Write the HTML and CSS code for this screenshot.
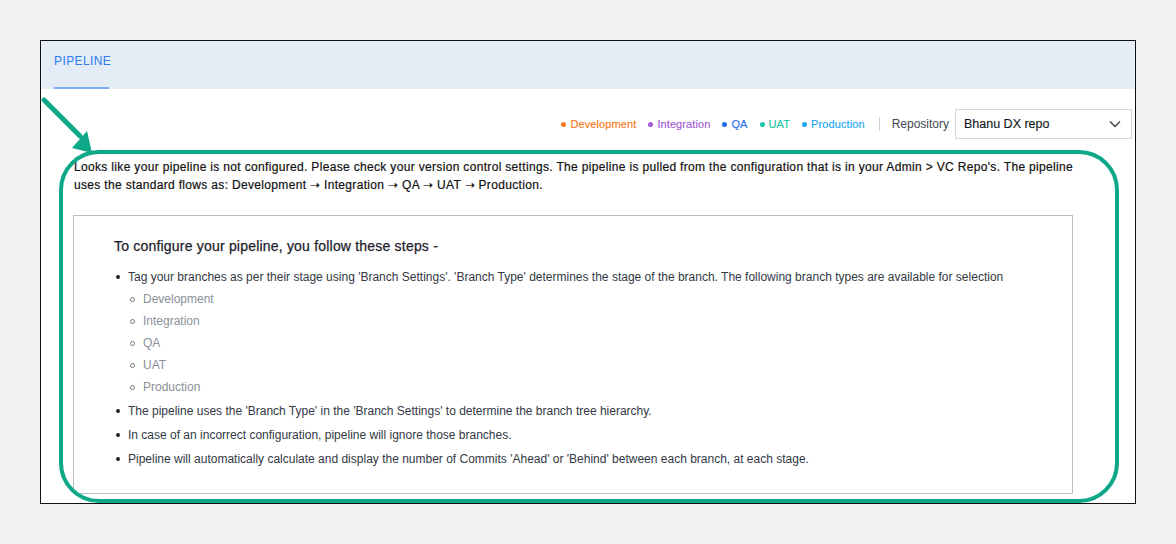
FILE: index.html
```html
<!DOCTYPE html>
<html lang="en">
<head>
    <meta charset="UTF-8">
    <title>Pipeline</title>
    <link rel="stylesheet" href="styles.css">
</head>
<body>
    <div class="frame">
        <div class="tabs">
            <div class="tab active">PIPELINE</div>
        </div>

        <div class="toolbar">
            <ul class="legend">
                <li class="dev">Development</li>
                <li class="int">Integration</li>
                <li class="qa">QA</li>
                <li class="uat">UAT</li>
                <li class="prod">Production</li>
            </ul>
            <div class="divider"></div>
            <span class="repo-label">Repository</span>
            <div class="select">
                <span>Bhanu DX repo</span>
                <svg width="12" height="8" viewBox="0 0 12 8"><path d="M1 1.5 L6 6.5 L11 1.5" fill="none" stroke="#3a3f47" stroke-width="1.3"/></svg>
            </div>
        </div>

        <div class="content">
            <p class="notice">Looks like your pipeline is not configured. Please check your version control settings. The pipeline is pulled from the configuration that is in your Admin &gt; VC Repo's. The pipeline<br>uses the standard flows as: Development &#10141; Integration &#10141; QA &#10141; UAT &#10141; Production.</p>

            <div class="steps">
                <h3>To configure your pipeline, you follow these steps -</h3>
                <ul>
                    <li>Tag your branches as per their stage using 'Branch Settings'. 'Branch Type' determines the stage of the branch. The following branch types are available for selection
                        <ul class="sub">
                            <li>Development</li>
                            <li>Integration</li>
                            <li>QA</li>
                            <li>UAT</li>
                            <li>Production</li>
                        </ul>
                    </li>
                    <li>The pipeline uses the 'Branch Type' in the 'Branch Settings' to determine the branch tree hierarchy.</li>
                    <li>In case of an incorrect configuration, pipeline will ignore those branches.</li>
                    <li>Pipeline will automatically calculate and display the number of Commits 'Ahead' or 'Behind' between each branch, at each stage.</li>
                </ul>
            </div>
        </div>

        <!-- annotation overlay -->
        <div class="highlight"></div>
        <svg class="arrow" width="60" height="120" viewBox="0 0 60 120">
            <line x1="3" y1="59" x2="39" y2="95" stroke="#0ca887" stroke-width="5" stroke-linecap="round"/>
            <polygon points="31,107 46,90 51,112" fill="#0ca887"/>
        </svg>
    </div>
</body>
</html>
```

FILE: styles.css
```css
body {
    margin: 0;
    padding: 40px 0 0 40px;
    background: #f1f1f1;
    font-family: "Liberation Sans", Arial, sans-serif;
}

.frame {
    position: relative;
    box-sizing: border-box;
    width: 1096px;
    height: 464px;
    background: #fff;
    border: 1px solid #111;
}

.tabs {
    height: 48px;
    background: #e4ecf5;
    padding-left: 13px;
}

.tab {
    display: inline-block;
    box-sizing: border-box;
    height: 48px;
    padding-top: 13px;
    width: 55px;
    font-size: 12px;
    line-height: 14px;
    color: #2c7bf2;
    letter-spacing: 0.4px;
    white-space: nowrap;
}

.tab.active {
    border-bottom: 2px solid #7aacf4;
}

.toolbar {
    display: flex;
    justify-content: flex-end;
    align-items: center;
    margin-top: 20px;
    padding-right: 3px;
}

.legend {
    display: flex;
    gap: 12px;
    margin: 0;
    padding: 0;
    list-style: none;
    font-size: 11px;
    letter-spacing: 0.1px;
}

.legend li {
    display: flex;
    align-items: center;
    -webkit-text-stroke: 0.15px currentColor;
}

.legend li::before {
    content: "";
    width: 5px;
    height: 5px;
    border-radius: 50%;
    margin-right: 4px;
    background: currentColor;
}

.dev { color: #f7791a; }
.int { color: #a45ad9; }
.qa { color: #1f6df0; }
.uat { color: #14c6a6; }
.prod { color: #1aa7f4; }

.divider {
    width: 1px;
    height: 14px;
    background: #cfd3d8;
    margin: 0 12px 0 14px;
}

.repo-label {
    font-size: 12px;
    color: #3f4754;
    margin-right: 6px;
}

.select {
    display: flex;
    align-items: center;
    justify-content: space-between;
    box-sizing: border-box;
    width: 177px;
    height: 30px;
    padding: 0 10px 0 8px;
    border: 1px solid #d3d6db;
    font-size: 12.5px;
    color: #15181d;
    -webkit-text-stroke: 0.15px #15181d;
}

.content {
    width: 1000px;
    margin: 19px 0 0 32px;
}

.notice {
    margin: 0;
    font-size: 12px;
    line-height: 18px;
    color: #111;
    letter-spacing: 0.33px;
    -webkit-text-stroke: 0.2px #111;
    padding-left: 1px;
    white-space: nowrap;
}

.steps {
    margin-top: 21px;
    border: 1px solid #b9bec6;
    padding: 20px 40px 21px;
}

.steps h3 {
    margin: 0;
    font-size: 14px;
    line-height: 20px;
    font-weight: normal;
    letter-spacing: 0.2px;
    color: #1d222b;
    -webkit-text-stroke: 0.25px #1d222b;
}

.steps ul {
    margin: 10px 0 0;
    padding: 0 0 0 2px;
    list-style: none;
}

.steps li {
    font-size: 12px;
    line-height: 22px;
    color: #323844;
    margin-bottom: 2px;
    padding-left: 12px;
    position: relative;
}

.steps li::before {
    content: "";
    position: absolute;
    left: 0;
    top: 9px;
    width: 4px;
    height: 4px;
    border-radius: 50%;
    background: #222;
}

.steps ul.sub {
    margin: 0;
    padding-left: 2px;
}

.steps ul.sub li {
    color: #8a9098;
    margin-bottom: 0;
    padding-left: 13px;
}

.steps ul.sub li::before {
    box-sizing: border-box;
    top: 9px;
    width: 5px;
    height: 5px;
    background: none;
    border: 1px solid #777;
}

.highlight {
    position: absolute;
    left: 18px;
    top: 109px;
    box-sizing: border-box;
    width: 1060px;
    height: 353px;
    border: 4px solid #0ca887;
    border-radius: 40px;
    pointer-events: none;
}

.arrow {
    position: absolute;
    left: 0;
    top: 0;
    overflow: visible;
}
```
